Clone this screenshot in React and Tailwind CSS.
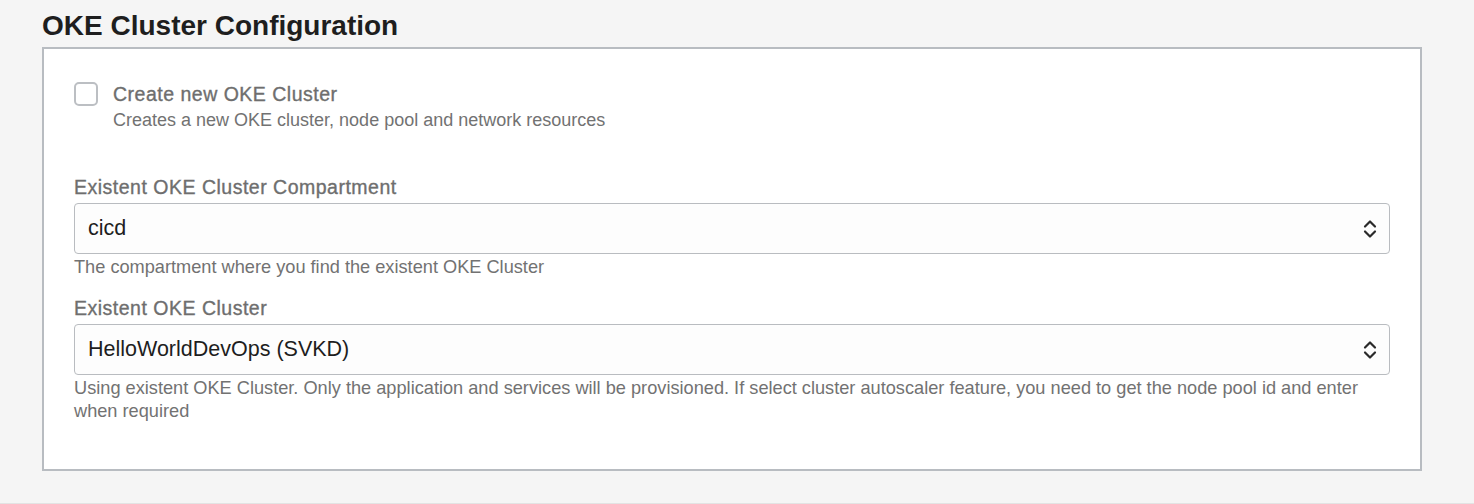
import React from "react";

function Chevrons() {
  return (
    <svg width="14" height="20" viewBox="0 0 14 20" fill="none" className="shrink-0">
      <path d="M2 7.5 L7 2.5 L12 7.5" stroke="#2a2a2a" strokeWidth="2.2" strokeLinecap="round" strokeLinejoin="round" />
      <path d="M2 12.5 L7 17.5 L12 12.5" stroke="#2a2a2a" strokeWidth="2.2" strokeLinecap="round" strokeLinejoin="round" />
    </svg>
  );
}

function SelectField({ label, value, help }) {
  return (
    <div className="flex flex-col">
      <div className="text-[19.5px] leading-[22px] tracking-[0.5px] text-[#6e6e6e] [-webkit-text-stroke:0.35px_#6e6e6e] mb-[5px]">
        {label}
      </div>
      <div className="flex items-center justify-between h-[51px] pl-[13px] pr-[12px] bg-[#fdfdfd] border border-[#b9bcc0] rounded-[4px]">
        <span className="text-[21.5px] text-[#1e1e1e]">{value}</span>
        <Chevrons />
      </div>
      <div className="text-[18.2px] leading-[23px] text-[#727272] mt-[2px]">{help}</div>
    </div>
  );
}

export default function App() {
  return (
    <div
      className="bg-[#f5f5f5] w-[1474px] h-[504px] border-b border-[#e3e3e3] pl-[42px] pt-[10px]"
      style={{ fontFamily: '"Liberation Sans", Arial, sans-serif' }}
    >
      <h2 className="text-[28px] leading-[32px] font-bold text-[#1e1e1e] mb-[5px]">OKE Cluster Configuration</h2>
      <div className="w-[1380px] h-[424px] bg-white border-2 border-[#b8bcc1] px-[30px] pt-[32px]">
        <div className="flex items-start gap-[15px]">
          <div className="w-[24px] h-[24px] mt-[1px] rounded-[5px] border-2 border-[#bcbfc3] bg-white shrink-0" />
          <div className="flex flex-col">
            <span className="text-[19.5px] leading-[26px] tracking-[0.5px] text-[#6e6e6e] [-webkit-text-stroke:0.35px_#6e6e6e]">
              Create new OKE Cluster
            </span>
            <span className="text-[18px] leading-[26px] text-[#727272]">Creates a new OKE cluster, node pool and network resources</span>
          </div>
        </div>
        <div className="mt-[43px] flex flex-col gap-[18px]">
          <SelectField
            label="Existent OKE Cluster Compartment"
            value="cicd"
            help="The compartment where you find the existent OKE Cluster"
          />
          <SelectField
            label="Existent OKE Cluster"
            value="HelloWorldDevOps (SVKD)"
            help="Using existent OKE Cluster. Only the application and services will be provisioned. If select cluster autoscaler feature, you need to get the node pool id and enter when required"
          />
        </div>
      </div>
    </div>
  );
}
